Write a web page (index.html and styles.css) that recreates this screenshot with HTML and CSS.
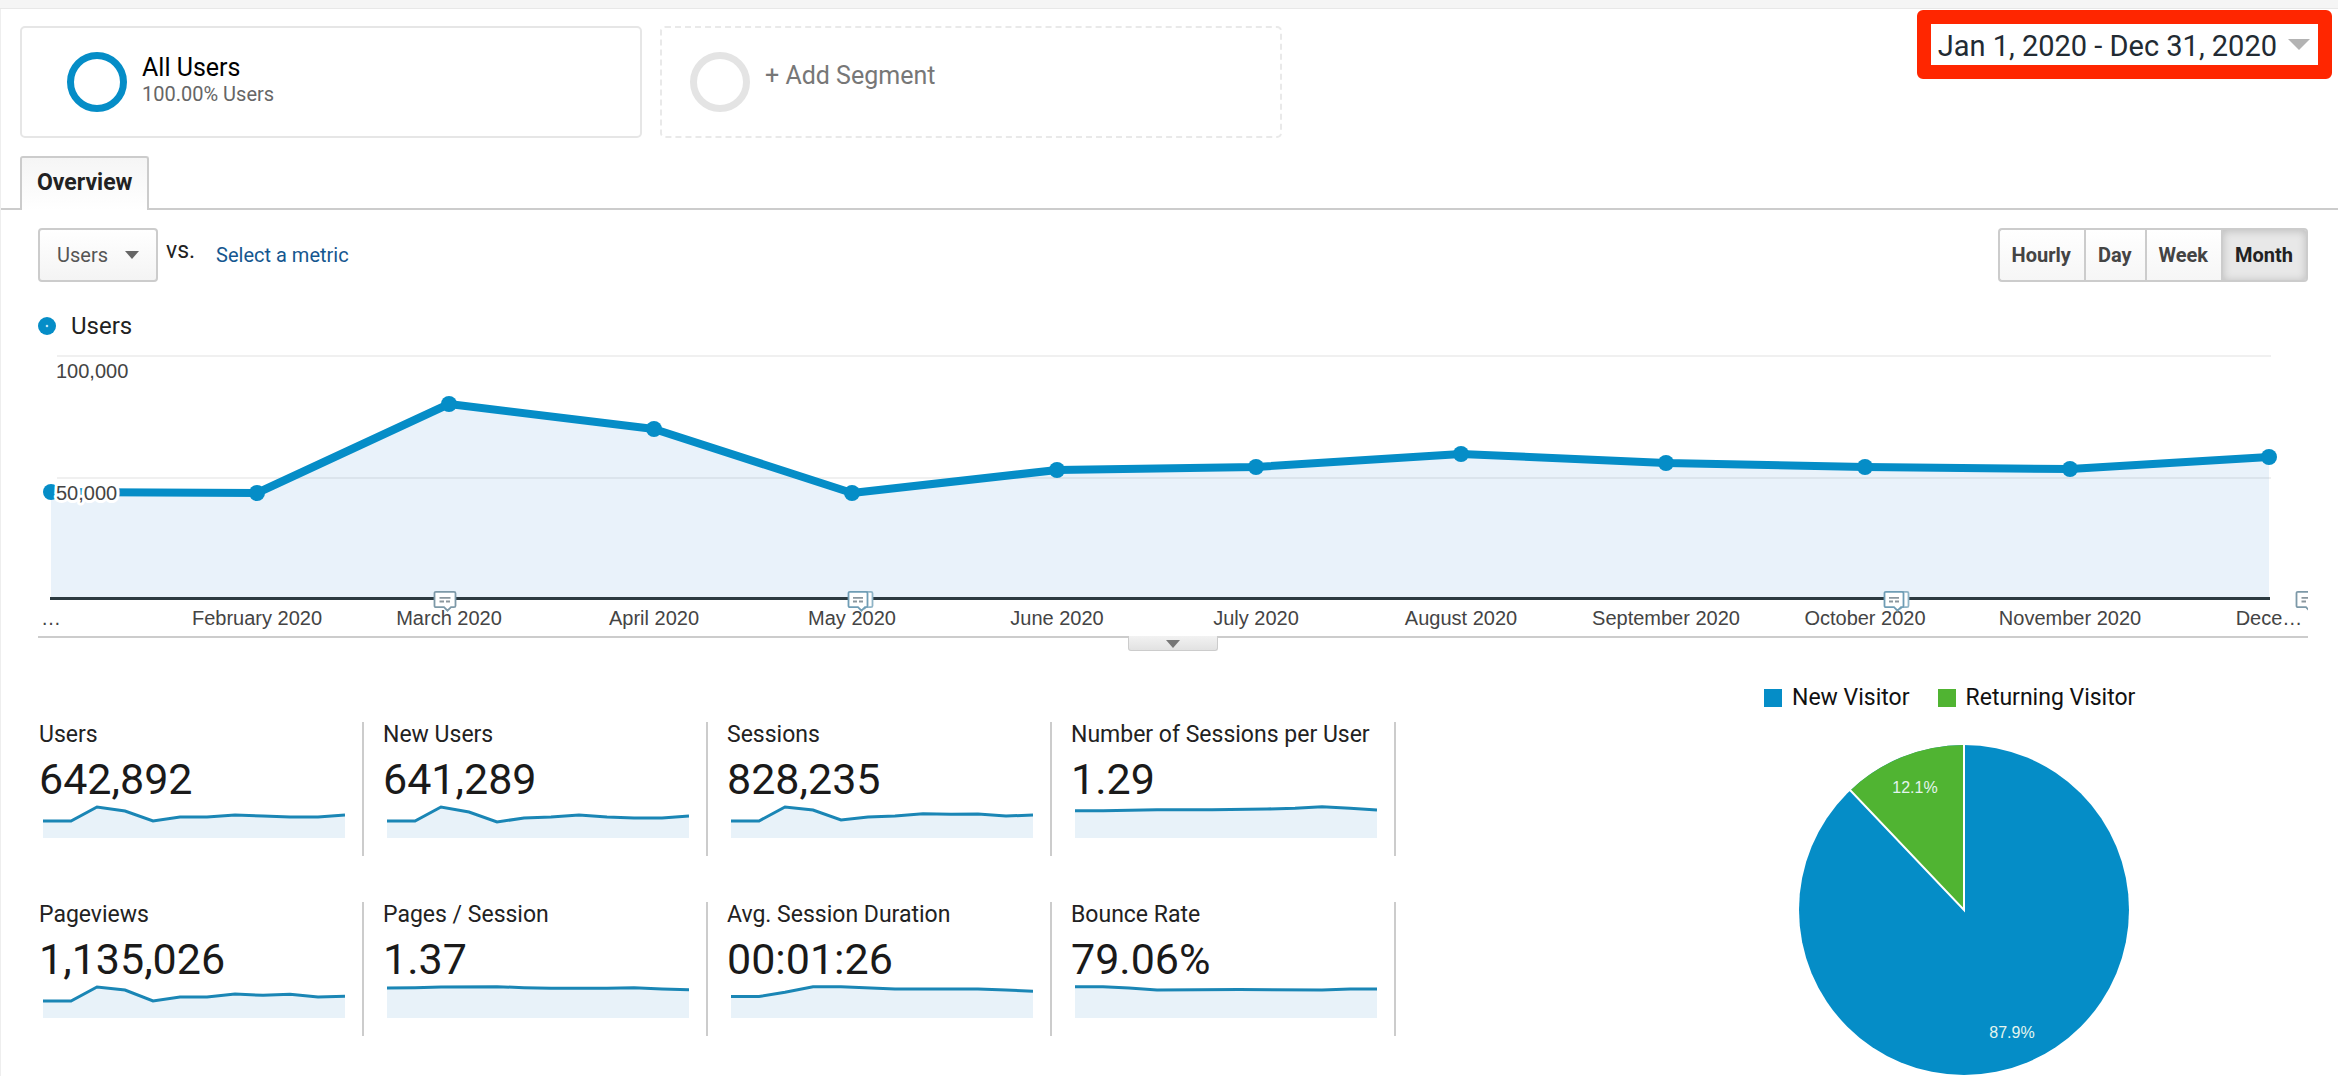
FILE: index.html
```html
<!DOCTYPE html>
<html lang="en">
<head>
<meta charset="utf-8">
<title>Audience Overview</title>
<link rel="stylesheet" href="styles.css">
</head>
<body>
<div class="strip"></div>
<main class="page">
  <header class="header">
    <div class="segments">
      <section class="segment">
        <span class="ring"></span>
        <div class="segment-text">
          <h2 class="segment-name">All Users</h2>
          <p class="segment-share">100.00% Users</p>
        </div>
      </section>
      <button type="button" class="segment segment-add">
        <span class="ring ring-empty"></span>
        <span class="segment-add-label">+ Add Segment</span>
      </button>
    </div>
    <button type="button" class="date-range">
      <span class="date-text">Jan 1, 2020 - Dec 31, 2020</span>
      <svg class="date-caret" width="22" height="11" viewBox="0 0 22 11" aria-hidden="true"><path d="M0 0h22L11 11z" fill="#b3b3b3"/></svg>
    </button>
  </header>

  <nav class="tabs"><a class="tab" href="#overview">Overview</a></nav>

  <section class="explorer" id="overview">
    <div class="controls">
      <div class="metric-picker">
        <select class="metric-select" aria-label="Metric"><option>Users</option></select>
        <svg class="metric-caret" width="14" height="8" viewBox="0 0 14 8" aria-hidden="true"><path d="M0 0h14L7 8z" fill="#666"/></svg>
      </div>
      <span class="versus">vs.</span>
      <a class="compare-link" href="#compare">Select a metric</a>
      <div class="granularity">
        <button type="button" class="grain">Hourly</button>
        <button type="button" class="grain">Day</button>
        <button type="button" class="grain">Week</button>
        <button type="button" class="grain grain-active" aria-pressed="true">Month</button>
      </div>
    </div>

    <div class="series-legend">
      <svg width="18" height="18" viewBox="0 0 18 18" aria-hidden="true"><circle cx="9" cy="9" r="9" fill="#058dc7"/><circle cx="9" cy="9" r="1.3" fill="#bfe6f7"/></svg>
      <span>Users</span>
    </div>

    <svg class="timeline" viewBox="38 345 2270 291" role="img" aria-label="Users by month">
      <defs>
        <g id="note">
          <path d="M2 .8h18q1.500 0 1.500 1.500v12.400q0 1.500-1.500 1.500h-3l-3.500 3.500-3.500-3.500H2q-1.500 0-1.500-1.500V2.300Q.5.800 2 .8z" fill="#fff" stroke="#7d99a8" stroke-width="1.800"/>
          <path d="M5.500 6.800h11M5.500 10.500h4.500M12 10.500h4" stroke="#8b979e" stroke-width="1.800" fill="none"/>
        </g>
        <g id="notes">
          <path d="M7 .8h16q1.500 0 1.500 1.500v12.400q0 1.500-1.500 1.500h-5l-2 2" fill="#fff" stroke="#8fb4c6" stroke-width="1.800"/>
          <path d="M2 .8h16q1.500 0 1.500 1.500v12.400q0 1.500-1.500 1.500h-1l-3.500 3.500-3.500-3.500H2q-1.500 0-1.500-1.500V2.300Q.5.800 2 .8z" fill="#fff" stroke="#6f9db5" stroke-width="1.800"/>
          <path d="M5 6.800h10M5 10.500h4M11 10.500h4" stroke="#8b979e" stroke-width="1.800" fill="none"/>
        </g>
      </defs>
      <path class="grid-line" d="M57 356H2271M57 478H2271"/>
      <path class="area" d="M51 492L257 493 449 404 654 429 852 493 1057 470 1256 467 1461 454 1666 463 1865 467 2070 469 2269 457V598H51z"/>
      <path class="axis" d="M50 598.500H2270"/>
      <path class="line" d="M51 492L257 493 449 404 654 429 852 493 1057 470 1256 467 1461 454 1666 463 1865 467 2070 469 2269 457"/>
      <g class="points">
        <circle cx="51" cy="492" r="8"/><circle cx="257" cy="493" r="8"/><circle cx="449" cy="404" r="8"/><circle cx="654" cy="429" r="8"/>
        <circle cx="852" cy="493" r="8"/><circle cx="1057" cy="470" r="8"/><circle cx="1256" cy="467" r="8"/><circle cx="1461" cy="454" r="8"/>
        <circle cx="1666" cy="463" r="8"/><circle cx="1865" cy="467" r="8"/><circle cx="2070" cy="469" r="8"/><circle cx="2269" cy="457" r="8"/>
      </g>
      <g class="y-labels"><text x="56" y="378">100,000</text><text x="56" y="500">50,000</text></g>
      <g class="x-labels">
        <text x="51" y="625">…</text><text x="257" y="625">February 2020</text><text x="449" y="625">March 2020</text><text x="654" y="625">April 2020</text>
        <text x="852" y="625">May 2020</text><text x="1057" y="625">June 2020</text><text x="1256" y="625">July 2020</text><text x="1461" y="625">August 2020</text>
        <text x="1666" y="625">September 2020</text><text x="1865" y="625">October 2020</text><text x="2070" y="625">November 2020</text><text x="2269" y="625">Dece…</text>
      </g>
      <use href="#note" x="434" y="591"/><use href="#notes" x="848" y="591"/><use href="#notes" x="1884" y="591"/><use href="#note" x="2296" y="591"/>
    </svg>
    <div class="timeline-foot">
      <button type="button" class="drawer" aria-label="Show annotations">
        <svg width="14" height="8" viewBox="0 0 14 8" aria-hidden="true"><path d="M0 0h14L7 8z" fill="#777"/></svg>
      </button>
    </div>
  </section>

  <section class="summary">
    <div class="metrics">
      <article class="metric"><h3 class="metric-name">Users</h3><p class="metric-value">642,892</p>
        <svg class="spark" viewBox="0 0 302 34" preserveAspectRatio="none" aria-hidden="true"><path class="spark-area" d="M0 17L28 17 54 3 82 7 110 17 137 13 164 13 192 11 220 12 247 13 275 13 302 11V34H0z"/><path class="spark-line" d="M0 17L28 17 54 3 82 7 110 17 137 13 164 13 192 11 220 12 247 13 275 13 302 11"/></svg></article>
      <article class="metric"><h3 class="metric-name">New Users</h3><p class="metric-value">641,289</p>
        <svg class="spark" viewBox="0 0 302 34" preserveAspectRatio="none" aria-hidden="true"><path class="spark-area" d="M0 17L28 17 54 3 82 8 110 18 137 14 164 13 192 11 220 13 247 14 275 14 302 12V34H0z"/><path class="spark-line" d="M0 17L28 17 54 3 82 8 110 18 137 14 164 13 192 11 220 13 247 14 275 14 302 12"/></svg></article>
      <article class="metric"><h3 class="metric-name">Sessions</h3><p class="metric-value">828,235</p>
        <svg class="spark" viewBox="0 0 302 34" preserveAspectRatio="none" aria-hidden="true"><path class="spark-area" d="M0 17L28 17 54 3 82 6 110 16 137 13 164 12 192 9.700 220 10.300 247 10 275 12 302 11V34H0z"/><path class="spark-line" d="M0 17L28 17 54 3 82 6 110 16 137 13 164 12 192 9.700 220 10.300 247 10 275 12 302 11"/></svg></article>
      <article class="metric"><h3 class="metric-name">Number of Sessions per User</h3><p class="metric-value">1.29</p>
        <svg class="spark" viewBox="0 0 302 34" preserveAspectRatio="none" aria-hidden="true"><path class="spark-area" d="M0 6.700L28 6.700 82 5.700 137 5.700 192 5 220 4.300 247 2.700 275 4.300 302 6V34H0z"/><path class="spark-line" d="M0 6.700L28 6.700 82 5.700 137 5.700 192 5 220 4.300 247 2.700 275 4.300 302 6"/></svg></article>
      <article class="metric"><h3 class="metric-name">Pageviews</h3><p class="metric-value">1,135,026</p>
        <svg class="spark" viewBox="0 0 302 34" preserveAspectRatio="none" aria-hidden="true"><path class="spark-area" d="M0 17L28 17 54 3 82 6 110 17 137 13 164 13 192 10 220 11.300 247 10.300 275 13 302 12.300V34H0z"/><path class="spark-line" d="M0 17L28 17 54 3 82 6 110 17 137 13 164 13 192 10 220 11.300 247 10.300 275 13 302 12.300"/></svg></article>
      <article class="metric"><h3 class="metric-name">Pages / Session</h3><p class="metric-value">1.37</p>
        <svg class="spark" viewBox="0 0 302 34" preserveAspectRatio="none" aria-hidden="true"><path class="spark-area" d="M0 4L28 3.700 54 3 110 2.700 137 3.700 164 4.300 220 4.300 247 3.700 275 5 302 5.700V34H0z"/><path class="spark-line" d="M0 4L28 3.700 54 3 110 2.700 137 3.700 164 4.300 220 4.300 247 3.700 275 5 302 5.700"/></svg></article>
      <article class="metric"><h3 class="metric-name">Avg. Session Duration</h3><p class="metric-value">00:01:26</p>
        <svg class="spark" viewBox="0 0 302 34" preserveAspectRatio="none" aria-hidden="true"><path class="spark-area" d="M0 12.500L28 12.500 54 8.300 82 2.700 110 2.700 164 5 247 5 275 6 302 7.300V34H0z"/><path class="spark-line" d="M0 12.500L28 12.500 54 8.300 82 2.700 110 2.700 164 5 247 5 275 6 302 7.300"/></svg></article>
      <article class="metric"><h3 class="metric-name">Bounce Rate</h3><p class="metric-value">79.06%</p>
        <svg class="spark" viewBox="0 0 302 34" preserveAspectRatio="none" aria-hidden="true"><path class="spark-area" d="M0 2.700L28 2.700 54 4 82 6 164 5.500 247 6 275 5 302 5V34H0z"/><path class="spark-line" d="M0 2.700L28 2.700 54 4 82 6 164 5.500 247 6 275 5 302 5"/></svg></article>
    </div>

    <figure class="visitors">
      <figcaption class="visitor-legend">
        <span class="legend-item"><i class="swatch swatch-new"></i>New Visitor</span>
        <span class="legend-item"><i class="swatch swatch-returning"></i>Returning Visitor</span>
      </figcaption>
      <svg class="pie" viewBox="0 0 400 332" role="img" aria-label="New and returning visitors">
        <circle cx="200" cy="166" r="165" fill="#058dc7"/>
        <path d="M200 166L86.300 46.400A165 165 0 0 1 200 1z" fill="#50b432"/>
        <path d="M200 0V166L86 46" fill="none" stroke="#fff" stroke-width="2"/>
        <text class="pie-label" x="151" y="49">12.1%</text>
        <text class="pie-label" x="248" y="294">87.9%</text>
      </svg>
    </figure>
  </section>
</main>
</body>
</html>
```
FILE: styles.css
```css
* { box-sizing: border-box; }

body {
  margin: 0;
  background: #fff;
  color: #222;
  font-family: Roboto, "Liberation Sans", sans-serif;
}

h2, h3, p, figure { margin: 0; font-weight: 400; }
button, select { font-family: inherit; margin: 0; }
svg { display: block; flex: none; }

.strip { height: 9px; background: #f5f5f5; border-bottom: 1px solid #e8e8e8; }
.page { border-left: 1px solid #eee; }

/* Segments and date range */
.header {
  display: flex;
  justify-content: space-between;
  align-items: flex-start;
  padding: 1px 6px 18px 19px;
}
.segments { display: flex; gap: 18px; padding-top: 16px; }
.segment {
  display: flex;
  width: 622px;
  height: 112px;
  border: 2px solid #e6e6e6;
  border-radius: 5px;
  background: #fff;
  padding: 24px 45px;
  gap: 15px;
}
.ring { flex: none; width: 60px; height: 60px; border: 7px solid #058dc7; border-radius: 50%; }
.segment-name { font-size: 25px; line-height: 28px; color: #000; }
.segment-share { font-size: 20px; line-height: 24px; color: #666; }
.segment-add { border: 2px dashed #e9e9e9; padding: 24px 28px; }
.ring-empty { border-color: #e4e4e4; }
.segment-add-label { padding-top: 8px; font-size: 25px; line-height: 32px; color: #777; }
.segment-text { padding-top: 2px; }

.date-range {
  display: flex;
  align-items: center;
  gap: 11px;
  height: 69px;
  padding: 0 8px 0 7px;
  border: 14px solid #ff2600;
  border-radius: 6px;
  background: #fff;
  color: #222b33;
  font-size: 29px;
  line-height: 38px;
}
.date-text { padding-top: 3px; }

/* Tabs */
.tabs { display: flex; padding-left: 19px; border-bottom: 2px solid #ccc; }
.tab {
  height: 54px;
  margin-bottom: -2px;
  padding: 0 15px;
  border: 2px solid #ccc;
  border-bottom: 0;
  border-radius: 3px 3px 0 0;
  background: linear-gradient(#f5f5f5, #fff);
  color: #222;
  font-size: 23px;
  font-weight: 700;
  line-height: 50px;
  text-decoration: none;
}

/* Explorer */
.explorer { padding: 18px 30px 0 37px; }
.controls { display: flex; align-items: center; height: 54px; }
.metric-picker { position: relative; margin-right: 8px; }
.metric-select {
  display: block;
  appearance: none;
  width: 120px;
  height: 54px;
  padding: 0 30px 0 17px;
  border: 2px solid #ccc;
  border-radius: 4px;
  background: linear-gradient(#fff, #f4f4f4);
  color: #555;
  font-size: 20px;
}
.metric-caret { position: absolute; right: 19px; top: 23px; pointer-events: none; }
.versus { padding-bottom: 8px; margin-right: 21px; color: #222; font-size: 23px; line-height: 28px; }
.compare-link { color: #15578f; font-size: 20px; line-height: 24px; text-decoration: none; }
.granularity { display: flex; height: 54px; margin-left: auto; }
.grain {
  padding: 0 13px 0 12px;
  border: 2px solid #ccc;
  border-right-width: 0;
  background: linear-gradient(#fff, #f6f6f6);
  color: #444;
  font-size: 20px;
  font-weight: 700;
}
.grain:first-child { border-radius: 4px 0 0 4px; }
.grain:last-child { border-right-width: 2px; border-radius: 0 4px 4px 0; }
.grain-active { background: #e8e8e8; box-shadow: inset 0 1px 8px #bbb; color: #222; }

.series-legend {
  display: flex;
  align-items: center;
  gap: 15px;
  margin: 30px 0 5px;
  color: #222;
  font-size: 24px;
  line-height: 28px;
}

.timeline { width: 100%; height: auto; font-family: "Liberation Sans", Arial, sans-serif; font-size: 20px; }
.grid-line { fill: none; stroke: #f0f0f0; stroke-width: 2; }
.area { fill: #4893d5; fill-opacity: .12; }
.line { fill: none; stroke: #058dc7; stroke-width: 8; stroke-linejoin: round; }
.axis { fill: none; stroke: #2c3a40; stroke-width: 3; }
.points { fill: #058dc7; }
.y-labels { fill: #444; stroke: #fff; stroke-width: 6; stroke-linejoin: round; paint-order: stroke; }
.x-labels { fill: #444; text-anchor: middle; }

.timeline-foot { display: flex; justify-content: center; border-top: 2px solid #ccc; }
.drawer {
  display: flex;
  justify-content: center;
  width: 90px;
  height: 15px;
  margin-top: -2px;
  padding: 4px 0 0;
  border: 1px solid #ccc;
  border-top: 0;
  border-radius: 0 0 3px 3px;
  background: linear-gradient(#f2f2f2, #e2e2e2);
}

/* Summary */
.summary { display: grid; grid-template-columns: 1376fr 912fr; padding: 33px 30px 0 19px; }
.metrics {
  display: grid;
  grid-template-columns: repeat(4, 1fr);
  row-gap: 46px;
  align-content: start;
  padding-top: 38px;
}
.metric { padding: 1px 17px 18px 19px; border-right: 2px solid #ccc; }
.metric-name { font-size: 23px; line-height: 24px; color: #222; white-space: nowrap; }
.metric-value { margin-top: 8px; font-size: 43px; line-height: 48px; color: #1a1a1a; }
.spark { width: calc(100% - 4px); height: 34px; margin: 1px 0 0 4px; }
.spark-area { fill: #e8f2f9; }
.spark-line { fill: none; stroke: #1a86b5; stroke-width: 3; }

.visitors { width: 400px; margin-left: 368px; }
.visitor-legend { display: flex; gap: 28px; font-size: 23px; line-height: 28px; color: #111; white-space: nowrap; }
.legend-item { display: flex; align-items: center; gap: 10px; }
.swatch { width: 18px; height: 18px; }
.swatch-new { background: #058dc7; }
.swatch-returning { background: #50b432; }
.pie { width: 100%; height: auto; margin-top: 32px; }
.pie-label { font-family: "Liberation Sans", Arial, sans-serif; font-size: 16px; fill: #e4f5ee; text-anchor: middle; }
```
